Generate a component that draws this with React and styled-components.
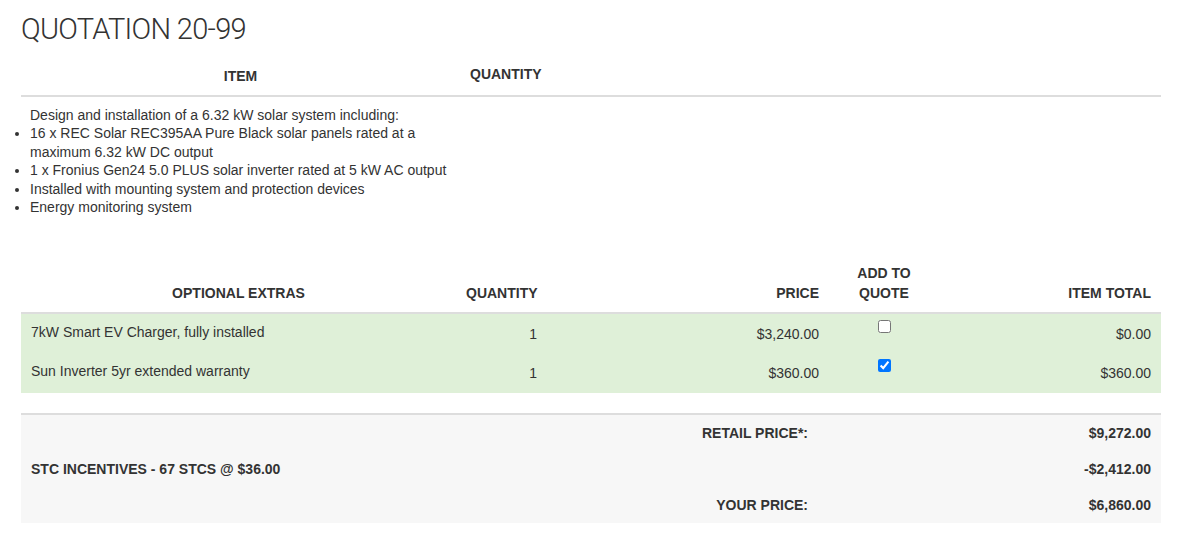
import React, { useState } from "react";
import styled, { createGlobalStyle } from "styled-components";

const GlobalStyle = createGlobalStyle`
  body {
    margin: 0;
    background: #fff;
    color: #333;
    font-family: "Liberation Sans", Arial, Helvetica, sans-serif;
    font-size: 14px;
  }
`;

const Page = styled.div`
  padding: 0 21px;
`;

const Title = styled.h1`
  margin: 12px 0 0 0;
  font-family: Roboto, "Liberation Sans", sans-serif;
  font-weight: 300;
  font-size: 29px;
  line-height: 34px;
  color: #333;
  letter-spacing: -0.7px;
`;

const Table = styled.table`
  width: 100%;
  border-collapse: collapse;
  margin-top: ${(p) => p.$top || 0}px;
  table-layout: fixed;
`;

const Th = styled.th`
  font-size: 14px;
  font-weight: bold;
  line-height: 20px;
  text-transform: uppercase;
  padding: ${(p) => (p.$raised ? "6px 10px 11px" : "8px 10px 9px")};
  border-bottom: 2px solid #ddd;
  text-align: ${(p) => p.$align || "left"};
  vertical-align: bottom;
`;

const Td = styled.td`
  padding: ${(p) => p.$pad || "8px 10px"};
  line-height: 20px;
  text-align: ${(p) => p.$align || "left"};
  vertical-align: ${(p) => p.$valign || "middle"};
`;

const DescCell = styled.td`
  padding: 9px 10px 0 9px;
  line-height: 18.4px;
  vertical-align: top;
`;

const Bullets = styled.ul`
  margin: 0;
  padding: 0;
`;

const ExtraRow = styled.tr`
  background: #dff0d8;
  height: 40px;
`;

const Check = styled.input`
  margin: 0;
  margin-top: 2px;
  width: 13px;
  height: 13px;
`;

const Totals = styled.table`
  width: 100%;
  border-collapse: collapse;
  table-layout: fixed;
  margin-top: 20px;
  border-top: 2px solid #ddd;
  background: #f7f7f7;
`;

const TotalCell = styled.td`
  padding: 8px 10px;
  line-height: 20px;
  font-size: 14px;
  font-weight: bold;
  text-align: ${(p) => p.$align || "left"};
`;

const Amount = styled.td`
  padding: 8px 10px;
  line-height: 20px;
  font-weight: bold;
  text-align: right;
`;

const extrasData = [
  { name: "7kW Smart EV Charger, fully installed", qty: 1, price: 3240, added: false },
  { name: "Sun Inverter 5yr extended warranty", qty: 1, price: 360, added: true },
];

const money = (n) =>
  (n < 0 ? "-$" : "$") +
  Math.abs(n).toLocaleString("en-US", { minimumFractionDigits: 2, maximumFractionDigits: 2 });

export default function App() {
  const [extras, setExtras] = useState(extrasData);
  const base = 8912;
  const stc = -2412;
  const retail = base + extras.reduce((s, e) => s + (e.added ? e.price * e.qty : 0), 0);

  const toggle = (i) =>
    setExtras(extras.map((e, j) => (j === i ? { ...e, added: !e.added } : e)));

  const numPad = "8px 10px";

  return (
    <Page>
      <GlobalStyle />
      <Title>QUOTATION 20-99</Title>

      <Table $top={12}>
        <colgroup>
          <col style={{ width: 439 }} />
          <col />
        </colgroup>
        <thead>
          <tr>
            <Th $align="center">Item</Th>
            <Th $raised>Quantity</Th>
          </tr>
        </thead>
        <tbody>
          <tr>
            <DescCell>
              Design and installation of a 6.32 kW solar system including:
              <Bullets>
                <li>16 x REC Solar REC395AA Pure Black solar panels rated at a maximum 6.32 kW DC output</li>
                <li>1 x Fronius Gen24 5.0 PLUS solar inverter rated at 5 kW AC output</li>
                <li>Installed with mounting system and protection devices</li>
                <li>Energy monitoring system</li>
              </Bullets>
            </DescCell>
            <td />
          </tr>
        </tbody>
      </Table>

      <Table $top={39}>
        <colgroup>
          <col style={{ width: 435 }} />
          <col style={{ width: 91 }} />
          <col style={{ width: 282 }} />
          <col style={{ width: 110 }} />
          <col />
        </colgroup>
        <thead>
          <tr>
            <Th $align="center">Optional Extras</Th>
            <Th $align="right">Quantity</Th>
            <Th $align="right">Price</Th>
            <Th $align="center">Add to Quote</Th>
            <Th $align="right">Item Total</Th>
          </tr>
        </thead>
        <tbody>
          {extras.map((e, i) => (
            <ExtraRow key={e.name}>
              <Td $valign="top" $pad="8px 10px 7px">{e.name}</Td>
              <Td $align="right" $pad={numPad}>{e.qty}</Td>
              <Td $align="right" $pad={numPad}>{money(e.price)}</Td>
              <Td $align="center" $valign="top" $pad="4px 10px">
                <Check type="checkbox" checked={e.added} onChange={() => toggle(i)} />
              </Td>
              <Td $align="right" $pad={numPad}>
                {money(e.added ? e.price * e.qty : 0)}
              </Td>
            </ExtraRow>
          ))}
        </tbody>
      </Table>

      <Totals>
        <colgroup>
          <col />
          <col style={{ width: 280 }} />
          <col style={{ width: 343 }} />
        </colgroup>
        <tbody>
          <tr>
            <TotalCell />
            <TotalCell $align="right">RETAIL PRICE*:</TotalCell>
            <Amount>{money(retail)}</Amount>
          </tr>
          <tr>
            <TotalCell>STC INCENTIVES - 67 STCS @ $36.00</TotalCell>
            <TotalCell />
            <Amount>{money(stc)}</Amount>
          </tr>
          <tr>
            <TotalCell />
            <TotalCell $align="right">YOUR PRICE:</TotalCell>
            <Amount>{money(retail + stc)}</Amount>
          </tr>
        </tbody>
      </Totals>
    </Page>
  );
}
